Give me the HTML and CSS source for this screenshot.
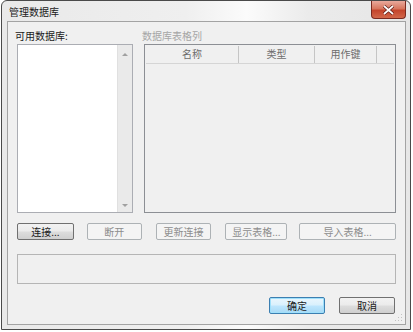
FILE: index.html
```html
<!DOCTYPE html>
<html lang="zh">
<head>
    <meta charset="UTF-8">
    <title>管理数据库</title>
    <link rel="stylesheet" href="styles.css">
</head>
<body>
<div class="window">
    <div class="titlebar">
        <span class="title">管理数据库</span>
        <div class="close">
            <svg width="13" height="10" viewBox="0 0 13 10">
                <path d="M2 1 L11 9 M11 1 L2 9" stroke="#5a1a14" stroke-width="3.2" fill="none"/>
                <path d="M2 1 L11 9 M11 1 L2 9" stroke="#fff" stroke-width="1.7" fill="none"/>
            </svg>
        </div>
    </div>
    <div class="client">
        <div class="panels">
            <div class="col-left">
                <div class="label">可用数据库:</div>
                <div class="listbox">
                    <div class="list-body"></div>
                    <div class="scrollbar">
                        <span class="arrow up"></span>
                        <span class="arrow down"></span>
                    </div>
                </div>
            </div>
            <div class="col-right">
                <div class="label disabled">数据库表格列</div>
                <div class="listview">
                    <div class="lv-header">
                        <div class="lv-col c-name">名称</div>
                        <div class="lv-col c-type">类型</div>
                        <div class="lv-col c-key">用作键</div>
                    </div>
                </div>
            </div>
        </div>
        <div class="actions">
            <button class="btn w-connect">连接...</button>
            <button class="btn off w-disc">断开</button>
            <button class="btn off w-refresh">更新连接</button>
            <button class="btn off w-show">显示表格...</button>
            <button class="btn off w-import">导入表格...</button>
        </div>
        <div class="status"></div>
        <div class="footer">
            <button class="btn default w-ok">确定</button>
            <button class="btn w-ok">取消</button>
        </div>
        <svg class="grip" width="8" height="8" viewBox="0 0 8 8">
            <rect x="6" y="0" width="1" height="1" fill="#c2c2c2"/>
            <rect x="3" y="3" width="1" height="1" fill="#c2c2c2"/>
            <rect x="6" y="3" width="1" height="1" fill="#c2c2c2"/>
            <rect x="0" y="6" width="1" height="1" fill="#c2c2c2"/>
            <rect x="3" y="6" width="1" height="1" fill="#c2c2c2"/>
            <rect x="6" y="6" width="1" height="1" fill="#c2c2c2"/>
        </svg>
    </div>
</div>
</body>
</html>
```
FILE: styles.css
```css
body {
    margin: 0;
    background: #ffffff;
    font-family: "Noto Sans CJK SC", "Liberation Sans", sans-serif;
    font-size: 10px;
    color: #1a1a1a;
}

.window {
    margin-left: 1px;
    width: 410px;
    height: 330px;
    border: 1px solid #4a4a4a;
    border-radius: 6px 6px 0 0;
    background: linear-gradient(to right, #e9e9e9 0%, #efefef 45%, #fbfbfb 60%, #ebebeb 75%, #e6e6e6 100%);
    padding: 0 4px 4px 5px;
    box-sizing: border-box;
    display: flex;
    flex-direction: column;
}

.titlebar {
    height: 23px;
    display: flex;
    align-items: flex-start;
    justify-content: space-between;
}

.title {
    margin-top: 5px;
    margin-left: 2px;
    line-height: 12px;
}

.close {
    width: 35px;
    height: 18px;
    border: 1px solid #7a2a20;
    border-top: none;
    border-radius: 0 0 4px 4px;
    background: linear-gradient(#e9a99c 0%, #d7775f 45%, #c4452c 55%, #d2674a 100%);
    display: flex;
    align-items: center;
    justify-content: center;
    box-sizing: border-box;
}

.client {
    flex: 1;
    border: 1px solid #a3a3a3;
    background: #f0f0f0;
    padding: 8px 9px 10px 9px;
    display: flex;
    flex-direction: column;
    position: relative;
}

.panels {
    display: flex;
    gap: 11px;
}

.label {
    height: 12px;
    line-height: 12px;
    margin-bottom: 2px;
    margin-left: -2px;
}

.label.disabled {
    color: #a6a6a6;
}

.col-left {
    width: 116px;
}

.col-right {
    flex: 1;
}

.listbox {
    height: 169px;
    border: 1px solid #abadb3;
    box-sizing: border-box;
    display: flex;
    background: #fff;
}

.list-body {
    flex: 1;
}

.scrollbar {
    width: 14px;
    background: #eaeaea;
    border-left: 1px solid #e0e0e0;
    display: flex;
    flex-direction: column;
    justify-content: space-between;
    align-items: center;
    padding: 8px 0 5px;
}

.arrow {
    width: 0;
    height: 0;
    border-left: 3px solid transparent;
    border-right: 3px solid transparent;
}

.arrow.up {
    border-bottom: 3px solid #a0a0a0;
}

.arrow.down {
    border-top: 3px solid #a0a0a0;
}

.listview {
    height: 169px;
    border: 1px solid #8c8f94;
    box-sizing: border-box;
    padding: 1px;
}

.lv-header {
    height: 17px;
    display: flex;
    border-bottom: 1px solid #d5d5d5;
}

.lv-col {
    line-height: 16px;
    text-align: center;
    color: #6d6d6d;
    border-right: 1px solid #c5c5c5;
    box-sizing: border-box;
}

.c-name {
    width: 93px;
}

.c-type {
    width: 76px;
}

.c-key {
    width: 62px;
}

.actions {
    display: flex;
    margin-top: 10px;
}

.btn {
    height: 17px;
    padding: 0;
    font-family: inherit;
    font-size: 10px;
    line-height: 14px;
    color: #1a1a1a;
    border: 1px solid #707070;
    border-radius: 2px;
    background: linear-gradient(#f2f2f2 0%, #ebebeb 48%, #dddddd 52%, #cfcfcf 100%);
    box-sizing: border-box;
}

.btn.off {
    color: #8d8d8d;
    border-color: #adb2b5;
    background: #f4f4f4;
}

.btn.default {
    border-color: #3c7fb1;
    background: linear-gradient(#eaf6fd 0%, #d9f0fc 48%, #bee6fd 52%, #a7d9f5 100%);
    box-shadow: inset 0 0 0 1px #9fe0fb;
}

.w-connect {
    width: 57px;
}

.w-disc {
    width: 55px;
    margin-left: 13px;
}

.w-refresh {
    width: 56px;
    margin-left: 14px;
}

.w-show {
    width: 62px;
    margin-left: 14px;
}

.w-import {
    width: 97px;
    margin-left: 12px;
}

.status {
    height: 30px;
    margin-top: 14px;
    border: 1px solid #b5b5b5;
    box-sizing: border-box;
}

.footer {
    display: flex;
    justify-content: flex-end;
    gap: 14px;
    margin-top: 13px;
    padding-right: 1px;
}

.w-ok {
    width: 56px;
}

.grip {
    position: absolute;
    right: 2px;
    bottom: 2px;
}
```
